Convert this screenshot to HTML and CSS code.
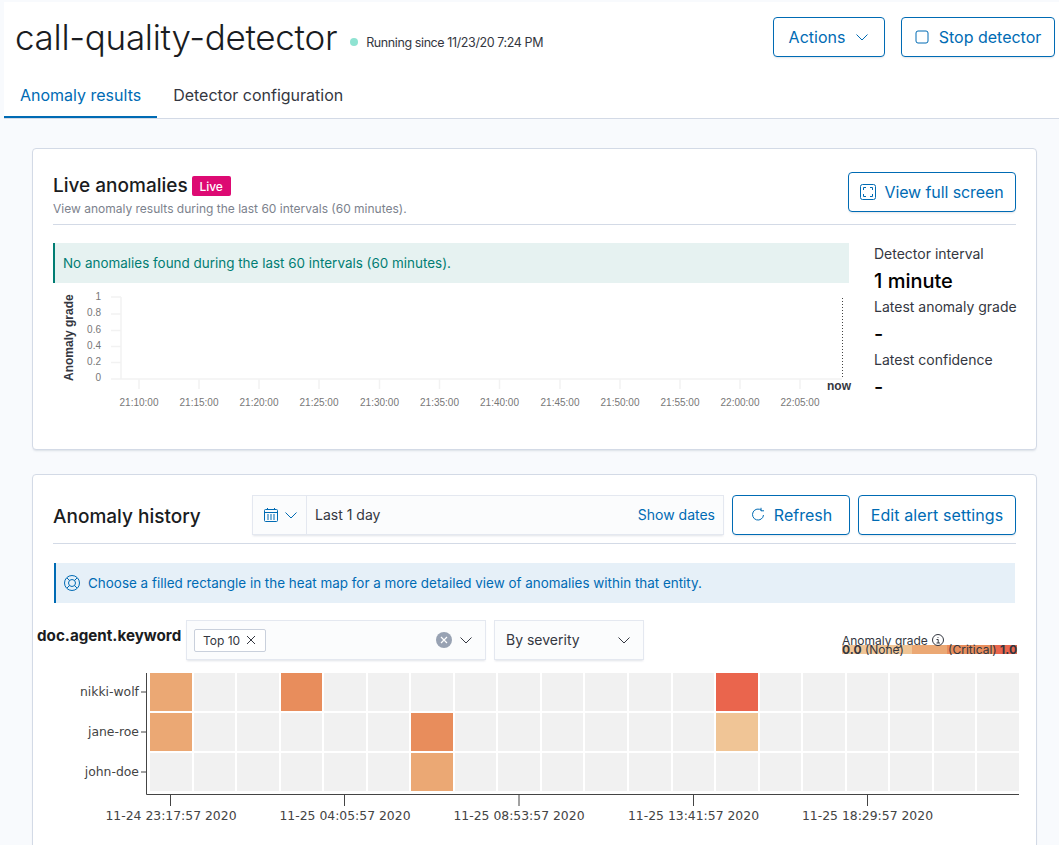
FILE: index.html
```html
<!DOCTYPE html>
<html lang="en">
<head>
    <meta charset="UTF-8">
    <title>call-quality-detector</title>
    <link rel="stylesheet" href="styles.css">
</head>
<body>
    <header class="page-header">
        <div class="title-row">
            <h1 class="detector-name">call-quality-detector</h1>
            <span class="status-dot"></span>
            <span class="status-text">Running since 11/23/20 7:24 PM</span>
            <button class="btn btn-actions">Actions
                <svg class="chevron" width="14" height="14" viewBox="0 0 14 14"><path d="M1.5 4.5 7 10l5.500-5.500"/></svg>
            </button>
            <button class="btn btn-stop">
                <svg width="14" height="14" viewBox="0 0 14 14"><rect x="1" y="1" width="12" height="12" rx="2" fill="none" stroke="#006bb4"/></svg>
                Stop detector
            </button>
        </div>
        <nav class="tabs">
            <a class="tab active">Anomaly results</a>
            <a class="tab">Detector configuration</a>
        </nav>
    </header>

    <main class="content">
        <section class="panel live-panel">
            <div class="panel-head live-head">
                <div>
                    <h2 class="panel-title">Live anomalies <span class="live-badge">Live</span></h2>
                    <p class="panel-sub">View anomaly results during the last 60 intervals (60 minutes).</p>
                </div>
                <button class="btn btn-full">
                    <svg width="16" height="16" viewBox="0 0 16 16" fill="none" stroke="#006bb4"><rect x="0.5" y="0.5" width="15" height="15" rx="2"/><path d="M3.5 6V3.5H6M10 3.5h2.5V6M12.5 10v2.5H10M6 12.5H3.5V10"/></svg>
                    View full screen
                </button>
            </div>
            <div class="live-body">
                <div class="live-chart">
                    <div class="callout callout-green">No anomalies found during the last 60 intervals (60 minutes).</div>
                    <svg class="line-chart" width="803" height="130" viewBox="53 283 803 130">
                        <g stroke="#f2f2f2" stroke-width="1.5" fill="none">
                            <path d="M121 297V379M111 379H842"/>
                            <path d="M111 297h10M111 314h10M111 330.5h10M111 346.5h10M111 362.500h10"/>
                            <path d="M139 379v10M199 379v10M259 379v10M319 379v10M379.500 379v10M439.500 379v10M499.500 379v10M560 379v10M620 379v10M680 379v10M740 379v10M800 379v10"/>
                        </g>
                        <path d="M842.500 298V378" stroke="#444" stroke-dasharray="1 2" fill="none"/>
                        <text class="axis-name" transform="translate(73 381) rotate(-90)">Anomaly grade</text>
                        <g class="tick-y">
                            <text x="101" y="300">1</text>
                            <text x="101" y="316">0.8</text>
                            <text x="101" y="333">0.6</text>
                            <text x="101" y="349">0.4</text>
                            <text x="101" y="365">0.2</text>
                            <text x="101" y="381">0</text>
                        </g>
                        <g class="tick-x">
                            <text x="139" y="406">21:10:00</text>
                            <text x="199" y="406">21:15:00</text>
                            <text x="259" y="406">21:20:00</text>
                            <text x="319" y="406">21:25:00</text>
                            <text x="379.500" y="406">21:30:00</text>
                            <text x="439.500" y="406">21:35:00</text>
                            <text x="499.500" y="406">21:40:00</text>
                            <text x="560" y="406">21:45:00</text>
                            <text x="620" y="406">21:50:00</text>
                            <text x="680" y="406">21:55:00</text>
                            <text x="740" y="406">22:00:00</text>
                            <text x="800" y="406">22:05:00</text>
                        </g>
                        <text class="now-label" x="827" y="390">now</text>
                    </svg>
                </div>
                <dl class="stats">
                    <dt>Detector interval</dt>
                    <dd>1 minute</dd>
                    <dt>Latest anomaly grade</dt>
                    <dd>-</dd>
                    <dt>Latest confidence</dt>
                    <dd>-</dd>
                </dl>
            </div>
        </section>

        <section class="panel history-panel">
            <div class="panel-head history-head">
                <h2 class="panel-title history-title">Anomaly history</h2>
                <div class="date-picker">
                    <span class="date-quick">
                        <svg width="16" height="16" viewBox="0 0 16 16" fill="none" stroke="#006bb4"><rect x="1.500" y="2.500" width="13" height="12" rx="1"/><path d="M1.500 5.500h13M4.500 1v2M11.500 1v2"/><path d="M4 8h2M7 8h2M10 8h2M4 10h2M7 10h2M10 10h2M4 12h2M7 12h2M10 12h2" stroke-width="1"/></svg>
                        <svg class="chevron" width="14" height="14" viewBox="0 0 14 14"><path d="M1.500 4.500 7 10l5.500-5.500"/></svg>
                    </span>
                    <span class="date-range">Last 1 day</span>
                    <a class="date-show">Show dates</a>
                </div>
                <button class="btn btn-refresh">
                    <svg width="16" height="16" viewBox="0 0 16 16" fill="none" stroke="#006bb4"><path d="M11.500 3.300A5.500 5.500 0 1 0 13.500 8"/><path d="M11 .8v3h3" stroke-width="1"/></svg>
                    Refresh
                </button>
                <button class="btn btn-alert">Edit alert settings</button>
            </div>

            <div class="callout callout-blue">
                <svg width="16" height="16" viewBox="0 0 16 16" fill="none" stroke="#006bb4"><circle cx="8" cy="8" r="7.500"/><circle cx="8" cy="8" r="3.500"/><path d="M3 3l2.500 2.500M13 3l-2.500 2.500M3 13l2.500-2.500M13 13l-2.500-2.500"/></svg>
                Choose a filled rectangle in the heat map for a more detailed view of anomalies within that entity.
            </div>

            <div class="filter-row">
                <label class="filter-label">doc.agent.keyword</label>
                <div class="combo">
                    <span class="tag">Top 10
                        <svg width="10" height="10" viewBox="0 0 10 10" fill="none" stroke="#343741"><path d="M1 1l8 8M9 1l-8 8"/></svg>
                    </span>
                    <span class="combo-clear">
                        <svg width="8" height="8" viewBox="0 0 8 8" fill="none" stroke="#fff" stroke-width="1.200"><path d="M1 1l6 6M7 1 1 7"/></svg>
                    </span>
                    <svg class="chevron dark" width="14" height="14" viewBox="0 0 14 14"><path d="M1.500 4.500 7 10l5.500-5.500"/></svg>
                </div>
                <div class="select">By severity
                    <svg class="chevron dark" width="14" height="14" viewBox="0 0 14 14"><path d="M1.500 4.500 7 10l5.500-5.500"/></svg>
                </div>
                <div class="legend">
                    <div class="legend-title">Anomaly grade
                        <svg width="14" height="14" viewBox="0 0 14 14" fill="none" stroke="#343741"><circle cx="7" cy="7" r="5.500"/><path d="M5.500 6.500H7.200V10M5.500 10h3.500M7 4v.8"/></svg>
                    </div>
                    <div class="legend-bar">
                        <span><b>0.0</b> (None)</span>
                        <span>(Critical) <b>1.0</b></span>
                    </div>
                </div>
            </div>

            <div class="heatmap">
                <div class="cells">
                    <div class="cell g2"></div><div class="cell"></div><div class="cell"></div><div class="cell g3"></div><div class="cell"></div><div class="cell"></div><div class="cell"></div><div class="cell"></div><div class="cell"></div><div class="cell"></div><div class="cell"></div><div class="cell"></div><div class="cell"></div><div class="cell g4"></div><div class="cell"></div><div class="cell"></div><div class="cell"></div><div class="cell"></div><div class="cell"></div><div class="cell"></div>
                    <div class="cell g2"></div><div class="cell"></div><div class="cell"></div><div class="cell"></div><div class="cell"></div><div class="cell"></div><div class="cell g3"></div><div class="cell"></div><div class="cell"></div><div class="cell"></div><div class="cell"></div><div class="cell"></div><div class="cell"></div><div class="cell g1"></div><div class="cell"></div><div class="cell"></div><div class="cell"></div><div class="cell"></div><div class="cell"></div><div class="cell"></div>
                    <div class="cell"></div><div class="cell"></div><div class="cell"></div><div class="cell"></div><div class="cell"></div><div class="cell"></div><div class="cell g2"></div><div class="cell"></div><div class="cell"></div><div class="cell"></div><div class="cell"></div><div class="cell"></div><div class="cell"></div><div class="cell"></div><div class="cell"></div><div class="cell"></div><div class="cell"></div><div class="cell"></div><div class="cell"></div><div class="cell"></div>
                </div>
                <svg class="heat-axes" width="970" height="160" viewBox="53 673 970 160">
                    <path d="M146.500 673V794.500H1019M141 692h5M141 732h5M141 772h5M170.500 795v11M344.500 795v11M519 795v11M693.500 795v11M867.500 795v11" fill="none" stroke="#444"/>
                    <g class="heat-y">
                        <text x="139" y="696">nikki-wolf</text>
                        <text x="139" y="736">jane-roe</text>
                        <text x="139" y="776">john-doe</text>
                    </g>
                    <g class="heat-x">
                        <text x="171" y="820">11-24 23:17:57 2020</text>
                        <text x="345" y="820">11-25 04:05:57 2020</text>
                        <text x="519" y="820">11-25 08:53:57 2020</text>
                        <text x="693.500" y="820">11-25 13:41:57 2020</text>
                        <text x="867.500" y="820">11-25 18:29:57 2020</text>
                    </g>
                </svg>
            </div>
        </section>
    </main>
</body>
</html>
```

FILE: styles.css
```css
html, body {
    height: 100%;
}
body {
    margin: 0;
    overflow: hidden;
    background: #f8fafd;
    color: #343741;
    font-family: Inter, "Liberation Sans", sans-serif;
    font-size: 14px;
}
h1, h2, p, dl, dd {
    margin: 0;
}
svg {
    flex: none;
}
.page-header {
    margin: 2px 0 0 4px;
    background: #fff;
    border-bottom: 1px solid #d3dae6;
}
.title-row {
    display: flex;
    align-items: center;
    height: 40px;
    padding: 15px 4px 0 11px;
}
.detector-name {
    font-size: 35px;
    font-weight: 300;
    line-height: 40px;
    color: #1a1c21;
    letter-spacing: -0.3px;
}
.status-dot {
    width: 8px;
    height: 8px;
    margin: 10px 8px 0 13px;
    border-radius: 50%;
    background: #8fe3d2;
}
.status-text {
    margin-top: 10px;
    font-size: 12.500px;
    letter-spacing: -0.4px;
}
.btn {
    display: inline-flex;
    align-items: center;
    justify-content: center;
    height: 40px;
    padding: 0;
    background: #fff;
    border: 1px solid #006bb4;
    border-radius: 4px;
    box-shadow: 0 2px 2px -1px rgba(152, 162, 179, 0.3);
    color: #006bb4;
    font-family: Inter, "Liberation Sans", sans-serif;
    font-size: 16px;
    box-sizing: border-box;
}
.chevron {
    fill: none;
    stroke: #006bb4;
}
.chevron.dark {
    stroke: #343741;
}
.btn-actions {
    width: 112px;
    gap: 10px;
    margin-left: auto;
}
.btn-stop {
    width: 154px;
    gap: 10px;
    margin-left: 16px;
}
.tabs {
    display: flex;
    margin-top: 18px;
}
.tab {
    height: 43px;
    padding: 0 16px;
    box-sizing: border-box;
    font-size: 16px;
    line-height: 41px;
}
.tab.active {
    color: #006bb4;
    border-bottom: 2px solid #006bb4;
}
.content {
    padding: 29px 22px 0 32px;
}
.panel {
    padding: 20px;
    background: #fff;
    border: 1px solid #d3dae6;
    border-radius: 4px;
    box-shadow: 0 2px 2px -1px rgba(152, 162, 179, 0.3);
}
.live-panel {
    height: 302px;
    box-sizing: border-box;
}
.history-panel {
    height: 420px;
    margin-top: 24px;
    box-sizing: border-box;
}
.panel-head {
    display: flex;
    border-bottom: 1px solid #d3dae6;
}
.live-head {
    justify-content: space-between;
    align-items: flex-start;
    padding-bottom: 7px;
}
.panel-title {
    display: flex;
    align-items: center;
    gap: 4px;
    margin-top: 5px;
    color: #1a1c21;
    font-size: 19px;
    font-weight: 500;
    line-height: 24px;
}
.live-badge {
    width: 39px;
    height: 20px;
    margin-top: -1px;
    border-radius: 2px;
    background: #dd0a73;
    color: #fff;
    font-size: 12px;
    line-height: 21px;
    text-align: center;
}
.panel-sub {
    margin-top: 3px;
    color: #7c828d;
    font-size: 12px;
    line-height: 16px;
}
.btn-full {
    width: 168px;
    gap: 8px;
    margin-top: 3px;
    letter-spacing: -0.1px;
}
.live-body {
    display: flex;
    margin-top: 18px;
}
.live-chart {
    width: 796px;
}
.callout {
    display: flex;
    align-items: center;
    height: 40px;
    padding-left: 8px;
    box-sizing: border-box;
    font-size: 13.450px;
}
.callout-green {
    background: #e6f2f1;
    border-left: 2px solid #017d73;
    color: #017d73;
}
.callout-blue {
    gap: 8px;
    margin: 19px 1px 0;
    background: #e6f0f8;
    border-left: 2px solid #006bb4;
    color: #006bb4;
}
.line-chart {
    display: block;
    overflow: visible;
}
.axis-name {
    fill: #343741;
    font-family: "Liberation Sans", sans-serif;
    font-size: 12px;
    font-weight: 700;
}
.tick-y text {
    fill: #777;
    font-family: "Liberation Sans", sans-serif;
    font-size: 10px;
    text-anchor: end;
}
.tick-x text {
    fill: #777;
    font-family: "Liberation Sans", sans-serif;
    font-size: 10px;
    text-anchor: middle;
}
.now-label {
    fill: #343741;
    font-family: "Liberation Sans", sans-serif;
    font-size: 12px;
    font-weight: 700;
}
.stats {
    margin-left: 25px;
    white-space: nowrap;
}
.stats dt {
    line-height: 21px;
}
.stats dd {
    padding-top: 2px;
    color: #000;
    font-size: 20px;
    font-weight: 500;
    line-height: 30px;
}
.history-head {
    align-items: center;
    padding-bottom: 8px;
}
.history-title {
    width: 199px;
    margin-top: 4px;
}
.date-picker {
    display: flex;
    align-items: center;
    width: 472px;
    height: 40px;
    box-sizing: border-box;
    background: #fbfcfd;
    border: 1px solid #e4e8f0;
    box-shadow: 0 2px 2px -1px rgba(152, 162, 179, 0.3);
}
.date-quick {
    display: flex;
    align-items: center;
    gap: 5px;
    height: 100%;
    padding: 0 8px 0 10px;
    border-right: 1px solid #e4e8f0;
}
.date-range {
    flex: 1;
    padding: 0 0 2px 8px;
}
.date-show {
    padding: 0 8px 2px 0;
    color: #006bb4;
}
.btn-refresh {
    width: 118px;
    gap: 8px;
    margin-left: 8px;
}
.btn-alert {
    width: 158px;
    margin-left: 8px;
    letter-spacing: 0.1px;
}
.filter-row {
    display: flex;
    align-items: flex-start;
    margin: 17px -1px 0 -16px;
}
.filter-label {
    width: 149px;
    color: #1a1c21;
    font-size: 15.200px;
    font-weight: 700;
    line-height: 32px;
    white-space: nowrap;
}
.combo, .select {
    display: flex;
    align-items: center;
    height: 40px;
    box-sizing: border-box;
    background: #fbfcfd;
    border: 1px solid #e4e8f0;
    box-shadow: 0 2px 2px -1px rgba(152, 162, 179, 0.3);
}
.combo {
    width: 300px;
    padding: 0 12px 0 7px;
}
.tag {
    display: flex;
    align-items: center;
    gap: 6px;
    height: 21px;
    padding: 0 9px 0 8px;
    background: #fff;
    border: 1px solid #c9d0dc;
    border-radius: 2px;
    font-size: 12px;
}
.combo-clear {
    display: flex;
    align-items: center;
    justify-content: center;
    width: 16px;
    height: 16px;
    margin: 0 7px 0 auto;
    border-radius: 50%;
    background: #98a2b3;
}
.select {
    justify-content: space-between;
    width: 150px;
    margin-left: 8px;
    padding: 0 12px 1px 11px;
}
.legend {
    width: 175px;
    margin-left: auto;
    padding-top: 13px;
    font-size: 12px;
}
.legend-title {
    display: flex;
    align-items: center;
    gap: 3px;
    height: 14px;
}
.legend-bar {
    display: flex;
    justify-content: space-between;
    height: 9px;
    margin-top: -2px;
    background: linear-gradient(to right, #f0c596 40%, #eba874 40% 60%, #e88d5c 60% 87%, #ea654d 87%);
    line-height: 10px;
}
.legend-bar b {
    font-weight: 700;
}
.heatmap {
    position: relative;
    margin: 13px -3px 0 97px;
}
.cells {
    display: grid;
    grid-template-columns: repeat(20, 1fr);
    grid-auto-rows: 38px;
    gap: 2px;
}
.cell {
    background: #f1f1f1;
}
.cell.g1 {
    background: #f0c596;
}
.cell.g2 {
    background: #eba874;
}
.cell.g3 {
    background: #e88d5c;
}
.cell.g4 {
    background: #ea654d;
}
.heat-axes {
    position: absolute;
    top: 0;
    left: -97px;
    overflow: visible;
}
.heat-y text, .heat-x text {
    fill: #444;
    font-family: "DejaVu Sans", sans-serif;
    font-size: 12.400px;
}
.heat-y text {
    text-anchor: end;
}
.heat-x text {
    text-anchor: middle;
}
```
